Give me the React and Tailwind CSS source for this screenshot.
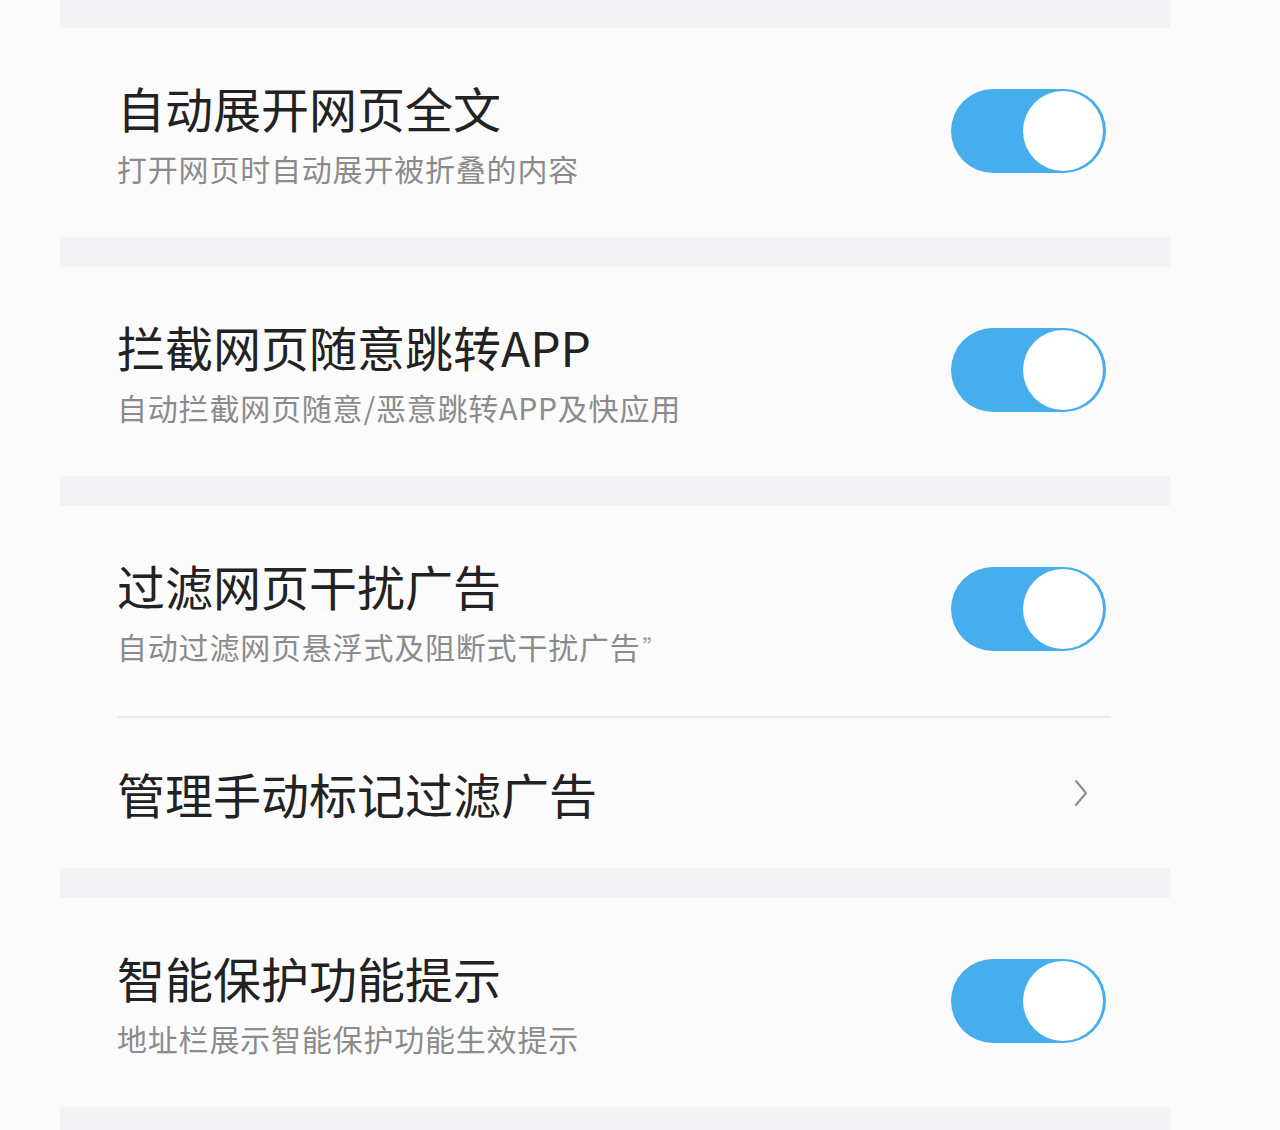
import React from 'react';

const Toggle = () => (
  <div className="w-[155px] h-[84px] rounded-full bg-[#47aeed] flex items-center justify-end pr-[3px] shrink-0">
    <div className="w-[80px] h-[80px] rounded-full bg-white" />
  </div>
);

const Chevron = () => (
  <svg width="14" height="28" viewBox="0 0 14 28" className="shrink-0">
    <polyline points="2,2 12,14 2,26" fill="none" stroke="#8a8a8a" strokeWidth="2" strokeLinejoin="round" strokeLinecap="round" />
  </svg>
);

const Band = ({ h = 'h-[30px]' }) => <div className={`${h} bg-[#f3f3f5]`} />;

const SwitchRow = ({ title, desc, extra }) => (
  <div className="flex items-center justify-between h-[209px] pl-[57px] pr-[64px]">
    <div>
      <div className="text-[48px] leading-[48px] text-[#222222]">{title}</div>
      <div className="mt-[22px] text-[30px] leading-[30px] tracking-[0.8px] text-[#8b8b8b]">
        {desc}
        {extra && <span className="text-[22px] align-top text-[#9a9a9a] ml-[2px]">{extra}</span>}
      </div>
    </div>
    <div className="mb-[3px]">
      <Toggle />
    </div>
  </div>
);

const settings = [
  { title: '自动展开网页全文', desc: '打开网页时自动展开被折叠的内容' },
  { title: '拦截网页随意跳转APP', desc: '自动拦截网页随意/恶意跳转APP及快应用' },
];

export default function App() {
  return (
    <div className="min-h-screen bg-[#fbfbfb] font-['Noto_Sans_CJK_SC','Noto_Sans',sans-serif]">
      <div className="w-[1110px] ml-[60px]">
        <Band h="h-[28px]" />
        <SwitchRow {...settings[0]} />
        <Band />
        <SwitchRow {...settings[1]} />
        <Band />
        <div>
          <div className="h-[210px]">
            <SwitchRow title="过滤网页干扰广告" desc="自动过滤网页悬浮式及阻断式干扰广告" extra="”" />
          </div>
          <div className="ml-[57px] mr-[59px] h-[2px] bg-[#e8e8e8]" />
          <div className="flex items-center justify-between h-[150px] pl-[57px] pr-[82px]">
            <div className="text-[48px] leading-[48px] text-[#222222]">管理手动标记过滤广告</div>
            <Chevron />
          </div>
        </div>
        <Band />
        <SwitchRow title="智能保护功能提示" desc="地址栏展示智能保护功能生效提示" />
        <Band h="h-[23px]" />
      </div>
    </div>
  );
}
